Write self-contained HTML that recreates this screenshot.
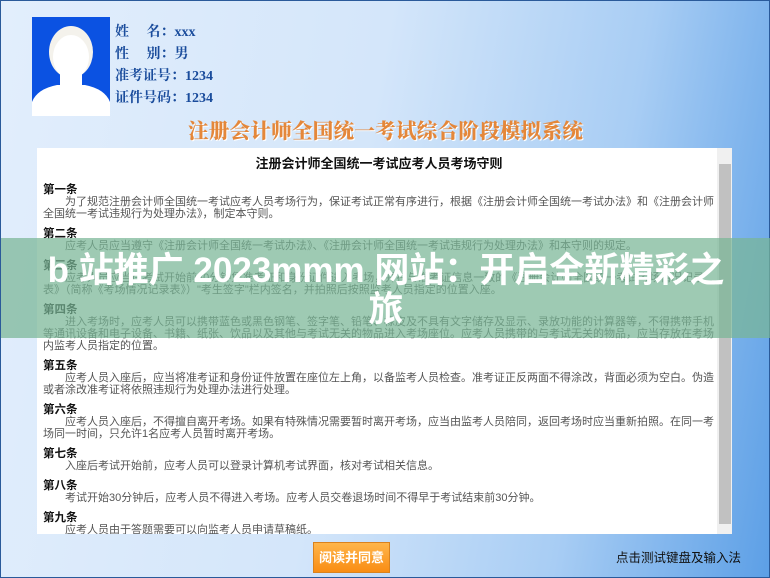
<!DOCTYPE html>
<html><head><meta charset="utf-8"><style>
*{margin:0;padding:0;box-sizing:border-box}
body{width:770px;height:578px;overflow:hidden;position:relative;font-family:"Liberation Sans","Noto Sans CJK SC",sans-serif;
background:linear-gradient(100deg,#e2eefc 0%,#d4e6fa 45%,#a8cdf4 75%,#5c9fe6 100%);border:1px solid #2a5a9a}
.photo{position:absolute;left:31px;top:16px;width:78px;height:99px;background:#0b52e2;overflow:hidden}
.info{position:absolute;left:114px;top:21px;font-family:"Liberation Serif","Noto Serif CJK SC",serif;font-weight:bold;font-size:14px;color:#1a4c9c;line-height:22px}
.otitle{position:absolute;left:187px;top:113px;font-family:"Noto Serif CJK SC",serif;font-weight:900;font-size:20.5px;color:#e4873a;letter-spacing:0.3px;text-shadow:1px 1px 0 #fff;white-space:nowrap}
.box{position:absolute;left:36px;top:147px;width:695px;height:386px;background:#fff;overflow:hidden}
.sb{position:absolute;right:0;top:0;width:15px;height:386px;background:#f0f0f0}
.thumb{position:absolute;left:2px;top:16px;width:12px;height:360px;background:#c1c1c1}
.content{position:absolute;left:6px;top:8px;width:672px;font-size:11px;line-height:12px;color:#555}
.content h1{text-align:center;font-size:13px;color:#111;font-weight:bold;margin-bottom:12px;line-height:16px}
.content h3{font-size:11.5px;color:#111;font-weight:bold;margin-top:8px;line-height:12px}
.content h3:first-of-type{margin-top:0}
.content p{text-indent:22px}
.band{position:absolute;left:0;top:237px;width:770px;height:100px;background:rgba(120,182,150,0.72)}
.btxt{position:absolute;left:0;top:250px;width:770px;text-align:center;color:#fff;font-weight:bold;font-size:35px;line-height:39px;white-space:nowrap}
.btn{position:absolute;left:312px;top:541px;width:77px;height:31px;background:linear-gradient(#ffb54a,#f98d14);border:1px solid #d9821e;color:#fff;font-size:13px;font-weight:bold;text-align:center;line-height:29px}
.kb{position:absolute;left:615px;top:546px;font-size:12.5px;color:#111}
</style></head><body>
<div class="photo"><svg width="78" height="99"><ellipse cx="39" cy="35" rx="22" ry="26" fill="#f4f2ec"/><ellipse cx="39" cy="40" rx="18" ry="22" fill="#fff"/><rect x="28" y="55" width="22" height="20" fill="#fff"/><path d="M0 85 Q5 72 25 68 L53 68 Q73 72 78 85 L78 99 L0 99Z" fill="#fff"/></svg></div>
<div class="info">姓&nbsp;&nbsp;&nbsp;&nbsp;&nbsp;名：xxx<br>性&nbsp;&nbsp;&nbsp;&nbsp;&nbsp;别：男<br>准考证号：1234<br>证件号码：1234</div>
<div class="otitle">注册会计师全国统一考试综合阶段模拟系统</div>
<div class="box">
<div class="content">
<h1>注册会计师全国统一考试应考人员考场守则</h1>
<h3>第一条</h3>
<p>为了规范注册会计师全国统一考试应考人员考场行为，保证考试正常有序进行，根据《注册会计师全国统一考试办法》和《注册会计师全国统一考试违规行为处理办法》，制定本守则。</p>
<h3>第二条</h3>
<p>应考人员应当遵守《注册会计师全国统一考试办法》、《注册会计师全国统一考试违规行为处理办法》和本守则的规定。</p>
<h3>第三条</h3>
<p>应考人员应当在考试开始前30分钟凭准考证和身份证件进入考场，并在与准考证信息一致的《注册会计师全国统一考试考场情况记录表》（简称《考场情况记录表》）"考生签字"栏内签名，并拍照后按照监考人员指定的位置入座。</p>
<h3>第四条</h3>
<p>进入考场时，应考人员可以携带蓝色或黑色钢笔、签字笔、铅笔、橡皮及不具有文字储存及显示、录放功能的计算器等，不得携带手机等通讯设备和电子设备、书籍、纸张、饮品以及其他与考试无关的物品进入考场座位。应考人员携带的与考试无关的物品，应当存放在考场内监考人员指定的位置。</p>
<h3>第五条</h3>
<p>应考人员入座后，应当将准考证和身份证件放置在座位左上角，以备监考人员检查。准考证正反两面不得涂改，背面必须为空白。伪造或者涂改准考证将依照违规行为处理办法进行处理。</p>
<h3>第六条</h3>
<p>应考人员入座后，不得擅自离开考场。如果有特殊情况需要暂时离开考场，应当由监考人员陪同，返回考场时应当重新拍照。在同一考场同一时间，只允许1名应考人员暂时离开考场。</p>
<h3>第七条</h3>
<p>入座后考试开始前，应考人员可以登录计算机考试界面，核对考试相关信息。</p>
<h3>第八条</h3>
<p>考试开始30分钟后，应考人员不得进入考场。应考人员交卷退场时间不得早于考试结束前30分钟。</p>
<h3>第九条</h3>
<p>应考人员由于答题需要可以向监考人员申请草稿纸。</p>
</div>
<div class="sb"><div class="thumb"></div></div>
</div>
<div class="band"></div>
<div class="btxt">b 站推广 2023mmm 网站：开启全新精彩之<br>旅</div>
<div class="btn">阅读并同意</div>
<div class="kb">点击测试键盘及输入法</div>
</body></html>
